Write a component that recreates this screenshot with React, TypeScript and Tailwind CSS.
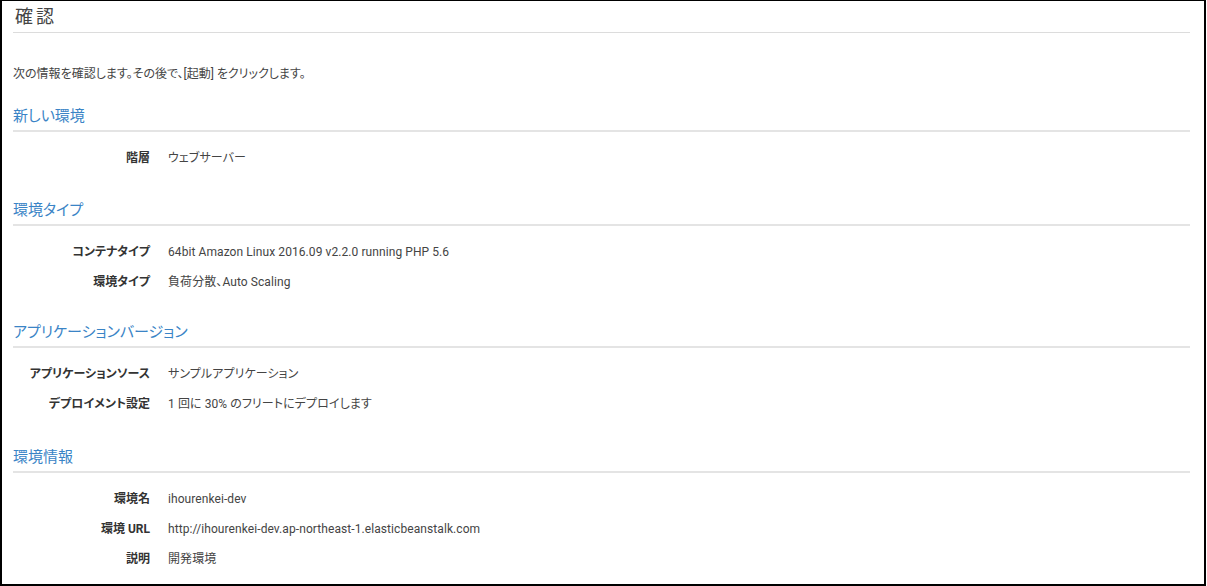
import React from 'react';

interface Row {
    label: string;
    value: string;
}

interface Section {
    title: string;
    gap: string;
    rows: Row[];
}

const sections: Section[] = [
    {
        title: '新しい環境',
        gap: 'mt-[23px]',
        rows: [{ label: '階層', value: 'ウェブサーバー' }],
    },
    {
        title: '環境タイプ',
        gap: 'mt-[26px]',
        rows: [
            { label: 'コンテナタイプ', value: '64bit Amazon Linux 2016.09 v2.2.0 running PHP 5.6' },
            { label: '環境タイプ', value: '負荷分散、Auto Scaling' },
        ],
    },
    {
        title: 'アプリケーションバージョン',
        gap: 'mt-[24px]',
        rows: [
            { label: 'アプリケーションソース', value: 'サンプルアプリケーション' },
            { label: 'デプロイメント設定', value: '1 回に 30% のフリートにデプロイします' },
        ],
    },
    {
        title: '環境情報',
        gap: 'mt-[27px]',
        rows: [
            { label: '環境名', value: 'ihourenkei-dev' },
            { label: '環境 URL', value: 'http://ihourenkei-dev.ap-northeast-1.elasticbeanstalk.com' },
            { label: '説明', value: '開発環境' },
        ],
    },
];

const ReviewSection: React.FC<{ section: Section }> = ({ section }) => {
    return (
        <div className={section.gap}>
            <h2 className="h-[22px] leading-[22px] text-[15px] text-[#3a84c6] pb-[3px] box-content border-b-2 border-[#e4e4e4]">
                {section.title}
            </h2>
            <div className="mt-[11px]">
                {section.rows.map((row) => (
                    <div key={row.label} className="flex items-center h-[30px] text-[12px]">
                        <div className="w-[137px] shrink-0 text-right font-bold text-[#333]">{row.label}</div>
                        <div className="ml-[18px] text-[#444] tracking-[0.08px]">{row.value}</div>
                    </div>
                ))}
            </div>
        </div>
    );
};

export default function App() {
    return (
        <div
            className="w-[1206px] h-[586px] bg-white border-black border-t border-l-2 border-r-2 border-b-2 overflow-hidden [font-feature-settings:'palt']"
            style={{ fontFamily: 'Roboto, "Noto Sans CJK JP", sans-serif' }}
        >
            <div className="ml-[11px] mr-[14px]">
                <div className="pt-[4px] pb-[3px] border-b border-[#dcdcdc]">
                    <h1 className="h-[24px] leading-[24px] text-[18px] tracking-[3px] text-[#444] pl-[2px]">確認</h1>
                </div>
                <p className="mt-[33px] h-[16px] leading-[16px] text-[12px] text-[#444]">
                    次の情報を確認します。その後で、[起動] をクリックします。
                </p>
                {sections.map((s) => (
                    <ReviewSection key={s.title} section={s} />
                ))}
            </div>
        </div>
    );
}
